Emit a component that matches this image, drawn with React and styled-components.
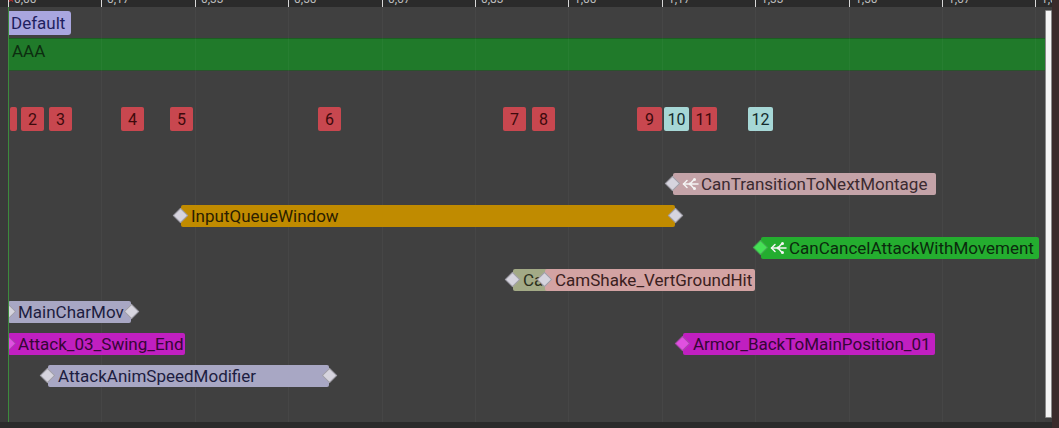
import React from 'react';
import styled, { createGlobalStyle } from 'styled-components';

const TICK0 = 8;
const TICK_STEP = 93.4;
const LABELS = ['0,00', '0,17', '0,33', '0,50', '0,67', '0,83', '1,00', '1,17', '1,33', '1,50', '1,67', '1,83'];

const MARKERS = [
  { n: '1', x: 10, w: 7, shift: -14, kind: 'red' },
  { n: '2', x: 21, kind: 'red' },
  { n: '3', x: 49, kind: 'red' },
  { n: '4', x: 121, kind: 'red' },
  { n: '5', x: 170, kind: 'red' },
  { n: '6', x: 318, kind: 'red' },
  { n: '7', x: 503, kind: 'red' },
  { n: '8', x: 532, kind: 'red' },
  { n: '9', x: 637, w: 25, kind: 'red' },
  { n: '10', x: 664, w: 25, kind: 'teal' },
  { n: '11', x: 692, w: 25, kind: 'red' },
  { n: '12', x: 748, w: 25, kind: 'teal' },
];

const TRACKS = [
  [{ label: 'CanTransitionToNextMontage', x: 673, w: 263, tone: 'rose', left: 'full', branch: true }],
  [{ label: 'InputQueueWindow', x: 181, w: 494, tone: 'gold', left: 'full', right: true }],
  [{ label: 'CanCancelAttackWithMovement', x: 761, w: 278, tone: 'green', left: 'green', branch: true }],
  [
    { label: 'Ca', x: 513, w: 40, tone: 'olive', left: 'full' },
    { label: 'CamShake_VertGroundHit', x: 545, w: 210, tone: 'salmon', left: 'full' },
  ],
  [{ label: 'MainCharMov', x: 8, w: 123, tone: 'lavender', left: 'half', right: true }],
  [
    { label: 'Attack_03_Swing_End', x: 8, w: 177, tone: 'magenta', left: 'halfMag' },
    { label: 'Armor_BackToMainPosition_01', x: 683, w: 252, tone: 'magenta', left: 'mag' },
  ],
  [{ label: 'AttackAnimSpeedModifier', x: 48, w: 281, tone: 'lavender', left: 'full', right: true }],
];

const TONES = {
  rose: { bg: '#c4a3a8', fg: '#3b2a30' },
  gold: { bg: '#c08b00', fg: '#2b1e00' },
  green: { bg: '#24ad2f', fg: '#0b2a0d' },
  olive: { bg: '#a3aa86', fg: '#2a2f1c' },
  salmon: { bg: '#d3a3a3', fg: '#3a2020' },
  lavender: { bg: '#a8a7c4', fg: '#1d1d40' },
  magenta: { bg: '#c01fc0', fg: '#360636' },
};

const DIAMONDS = {
  full: '#d6d4de',
  green: '#45e055',
  mag: '#e050e0',
  half: '#d6d4de',
  halfMag: '#e050e0',
};

const GlobalStyle = createGlobalStyle`
  html, body {
    margin: 0;
    padding: 0;
    background: #404040;
    overflow: hidden;
  }
  body {
    font-family: Roboto, "Liberation Sans", sans-serif;
  }
`;

const Frame = styled.div`
  width: 1059px;
  height: 428px;
  display: grid;
  grid-template-columns: 1fr 7px 7px;
  grid-template-rows: 7px 1fr 6px;
  background: #404040;
  overflow: hidden;
`;

const Ruler = styled.div`
  grid-column: 1 / 3;
  position: relative;
  background: #2b2b2b;
  overflow: hidden;
`;

const Tick = styled.div`
  position: absolute;
  top: 0;
  height: 7px;
  border-left: 1px solid #d8d8d8;
`;

const TickLabel = styled.span`
  position: absolute;
  top: -8px;
  left: 5px;
  font-size: 12px;
  color: #bdbdbd;
  white-space: nowrap;
`;

const StartMark = styled.span`
  position: absolute;
  left: 8px;
  top: -6px;
  color: #d03030;
  font-size: 10px;
`;

const Edge = styled.div`
  grid-column: 3;
  grid-row: 1 / 4;
  background: #3a2b2b;
`;

const ScrollTrack = styled.div`
  grid-column: 2;
  grid-row: 2;
  padding: 3px 0 4px;
  background: #3e3e3e;
  display: flex;
`;

const ScrollThumb = styled.div`
  flex: 1;
  background: #f4f4f4;
  border: 1px solid #8a8a8a;
  border-radius: 1px;
`;

const BottomBar = styled.div`
  grid-column: 1 / 3;
  grid-row: 3;
  background: #2b2b2b;
`;

const Canvas = styled.div`
  grid-column: 1;
  grid-row: 2;
  position: relative;
  display: flex;
  flex-direction: column;
  background: linear-gradient(to right, #3a3a3a 0, #3a3a3a 8px, #404040 8px);
`;

const GridLine = styled.div`
  position: absolute;
  top: 0;
  bottom: 0;
  width: 1px;
  background: rgba(255, 255, 255, 0.035);
  pointer-events: none;
`;

const PlayLine = styled.div`
  position: absolute;
  top: 0;
  bottom: 0;
  left: 8px;
  width: 1px;
  background: #3d8a3d;
  z-index: 3;
`;

const SectionRow = styled.div`
  height: 31px;
  padding: 4px 0 0 8px;
  box-sizing: border-box;
`;

const SectionBadge = styled.div`
  display: inline-flex;
  align-items: center;
  height: 24px;
  padding: 0 6px 0 3px;
  background: #a9a6df;
  color: #1f1f5e;
  font-size: 17px;
  border-radius: 0 3px 3px 0;
`;

const SlotBand = styled.div`
  height: 33px;
  margin-left: 8px;
  padding: 2px 0 0 4px;
  display: flex;
  align-items: flex-start;
  background: #207a2a;
  border-top: 1px solid #1b5e22;
  border-bottom: 1px solid #2a522c;
  color: #0d2d10;
  font-size: 17px;
  box-sizing: border-box;
`;

const MarkerRow = styled.div`
  position: relative;
  height: 24px;
  margin-top: 36px;
`;

const Marker = styled.div`
  position: absolute;
  top: 0;
  height: 24px;
  display: flex;
  align-items: center;
  justify-content: center;
  font-size: 16px;
  border-radius: 2px;
  background: ${({ $kind }) => ($kind === 'teal' ? '#a6d7d6' : '#c8474f')};
  color: ${({ $kind }) => ($kind === 'teal' ? '#132a2c' : '#3d0a0c')};
  overflow: hidden;
`;

const MarkerDigit = styled.span`
  flex: none;
  transform: translateX(${({ $shift }) => $shift || 0}px);
`;

const TrackList = styled.div`
  margin-top: 37px;
  display: flex;
  flex-direction: column;
`;

const TrackRow = styled.div`
  position: relative;
  height: 32px;
`;

const Notify = styled.div`
  position: absolute;
  top: 5px;
  height: 22px;
  display: flex;
  align-items: center;
  box-sizing: border-box;
  padding-left: 10px;
  background: ${({ $tone }) => TONES[$tone].bg};
  color: ${({ $tone }) => TONES[$tone].fg};
  font-size: 17px;
  white-space: nowrap;
  border-radius: 2px;
`;

const Diamond = styled.span`
  position: absolute;
  top: 5px;
  width: 9px;
  height: 9px;
  transform: rotate(45deg);
  background: ${({ $color }) => $color};
  border: 1px solid rgba(60, 60, 70, 0.35);
  ${({ $side }) => ($side === 'right' ? 'right: -6px;' : 'left: -6px;')}
  ${({ $half }) => ($half ? 'left: -5px; clip-path: polygon(0 0, 100% 0, 100% 100%);' : '')}
  z-index: 2;
`;

const BranchIcon = styled.svg`
  width: 18px;
  height: 16px;
  margin: 0 1px 0 -1px;
  flex: none;
`;

const LabelText = styled.span`
  position: relative;
  z-index: 1;
`;

function Branch() {
  return (
    <BranchIcon viewBox="0 0 18 16">
      <g fill="none" stroke="#f4f4f4" strokeWidth="1.5" strokeLinecap="round" strokeLinejoin="round">
        <path d="M5 4.5 L1.5 8 L5 11.5" />
        <path d="M1.5 8 H16" />
        <path d="M8 8 L12 3.5" />
        <path d="M8 8 L12 12.5" />
      </g>
      <circle cx="12.5" cy="3.5" r="1.5" fill="#f4f4f4" />
      <circle cx="12.5" cy="12.5" r="1.5" fill="#f4f4f4" />
      <circle cx="8" cy="8" r="1.4" fill="#f4f4f4" />
    </BranchIcon>
  );
}

function NotifyBar({ n }) {
  const half = n.left === 'half' || n.left === 'halfMag';
  return (
    <Notify $tone={n.tone} style={{ left: n.x, width: n.w }}>
      <Diamond $side="left" $color={DIAMONDS[n.left]} $half={half} />
      {n.branch && <Branch />}
      <LabelText>{n.label}</LabelText>
      {n.right && <Diamond $side="right" $color={DIAMONDS.full} />}
    </Notify>
  );
}

export default function App() {
  return (
    <>
      <GlobalStyle />
      <Frame>
        <Ruler>
          <StartMark>×</StartMark>
          {LABELS.map((l, i) => (
            <Tick key={l} style={{ left: Math.round(TICK0 + i * TICK_STEP) }}>
              <TickLabel>{l}</TickLabel>
            </Tick>
          ))}
        </Ruler>
        <Edge />
        <Canvas>
          {LABELS.map((l, i) => (
            <GridLine key={`g-${l}`} style={{ left: Math.round(TICK0 + i * TICK_STEP) }} />
          ))}
          <PlayLine />
          <SectionRow>
            <SectionBadge>Default</SectionBadge>
          </SectionRow>
          <SlotBand>AAA</SlotBand>
          <MarkerRow>
            {MARKERS.map((m) => (
              <Marker key={m.n} $kind={m.kind} style={{ left: m.x, width: m.w || 23 }}>
                <MarkerDigit $shift={m.shift}>{m.n}</MarkerDigit>
              </Marker>
            ))}
          </MarkerRow>
          <TrackList>
            {TRACKS.map((row, i) => (
              <TrackRow key={i}>
                {row.map((n) => (
                  <NotifyBar key={n.label} n={n} />
                ))}
              </TrackRow>
            ))}
          </TrackList>
        </Canvas>
        <ScrollTrack>
          <ScrollThumb />
        </ScrollTrack>
        <BottomBar />
      </Frame>
    </>
  );
}
